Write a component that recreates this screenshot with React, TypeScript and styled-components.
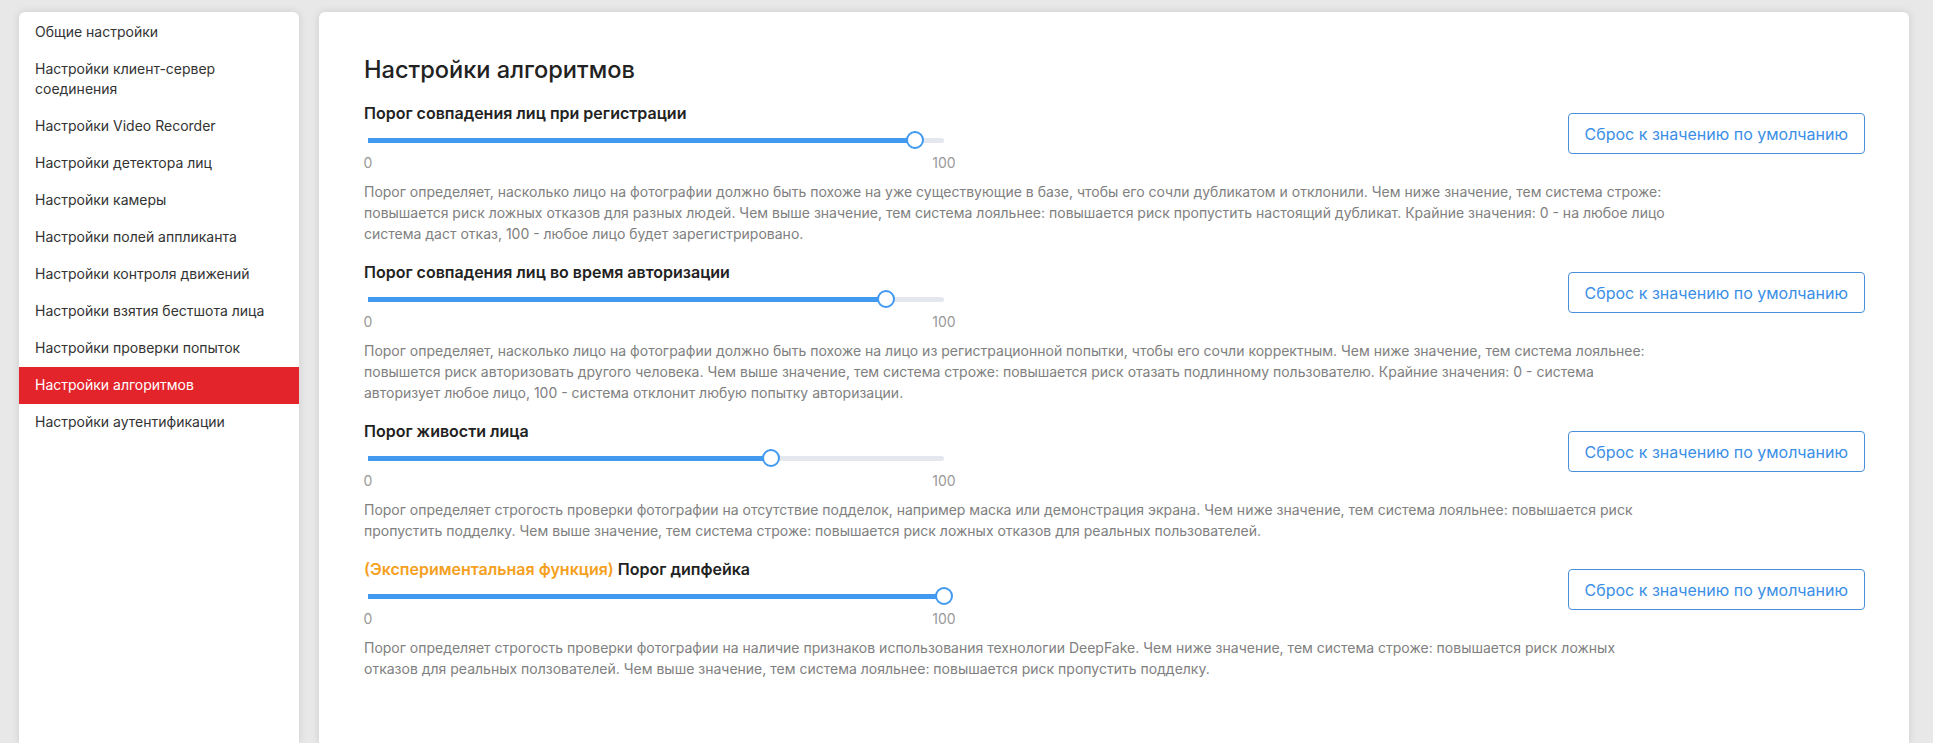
import styled, { createGlobalStyle } from "styled-components";

const GlobalStyle = createGlobalStyle`
  html, body {
    margin: 0;
    padding: 0;
    background: #e8e8e8;
    font-family: Inter, "Noto Sans", sans-serif;
    color: #222;
  }
  * {
    box-sizing: border-box;
  }
`;

const Page = styled.div`
  display: flex;
  align-items: stretch;
  gap: 20px;
  min-height: 100vh;
  padding: 12px 0 0 19px;
`;

const Sidebar = styled.nav`
  width: 280px;
  flex-shrink: 0;
  background: #fff;
  border-radius: 6px 6px 0 0;
  box-shadow: 0 0 8px rgba(0, 0, 0, 0.12);
  padding-top: 2px;
`;

interface MenuItemProps {
  $active?: boolean;
}

const MenuItem = styled.div<MenuItemProps>`
  padding: 8px 16px 9px;
  font-size: 14px;
  line-height: 20px;
  color: ${(p) => (p.$active ? "#fff" : "#333")};
  background: ${(p) => (p.$active ? "#e3242b" : "transparent")};
  cursor: pointer;
`;

const Main = styled.main`
  width: 1590px;
  flex-shrink: 0;
  background: #fff;
  border-radius: 6px 6px 0 0;
  box-shadow: 0 0 8px rgba(0, 0, 0, 0.12);
  padding: 46px 44px 40px 45px;
`;

const Title = styled.h2`
  margin: 0 0 21px;
  font-size: 23.6px;
  line-height: 24px;
  font-weight: 500;
  color: #222;
`;

const Section = styled.section`
  margin-bottom: 18px;
`;

const Row = styled.div`
  display: flex;
  justify-content: space-between;
  align-items: flex-start;
`;

const Heading = styled.h3`
  margin: 0;
  font-size: 16px;
  line-height: 20px;
  font-weight: 600;
  color: #222;
`;

const Experimental = styled.span`
  color: #f5a01e;
`;

const SliderBox = styled.div`
  width: 576px;
  margin: 7px 0 0 4px;
`;

const TrackArea = styled.div`
  position: relative;
  height: 20px;
  display: flex;
  align-items: center;
`;

const Rail = styled.div`
  position: relative;
  width: 100%;
  height: 5px;
  background: #e4e7ee;
  border-radius: 0 3px 3px 0;
`;

const Fill = styled.div`
  height: 100%;
  background: #4299f0;
`;

const Thumb = styled.div`
  position: absolute;
  top: 50%;
  width: 18px;
  height: 18px;
  border-radius: 50%;
  background: #fff;
  border: 2px solid #4299f0;
  transform: translate(-50%, -50%);
`;

const Marks = styled.div`
  position: relative;
  height: 20px;
  margin-top: 3px;
`;

const Mark = styled.span`
  position: absolute;
  top: 0;
  font-size: 14px;
  line-height: 20px;
  color: #999;
  transform: translateX(-50%);
`;

const ResetButton = styled.button`
  margin-top: 10px;
  height: 41px;
  padding: 0 16px;
  background: #fff;
  border: 1px solid #4a90d9;
  border-radius: 4px;
  color: #3a8ee6;
  font-family: Inter, "Noto Sans", sans-serif;
  font-size: 16px;
  cursor: pointer;
  white-space: nowrap;
`;

const Description = styled.p`
  margin: 8px 0 0;
  max-width: 1308px;
  font-size: 14px;
  line-height: 21px;
  color: #808080;
`;

const menu = [
  "Общие настройки",
  "Настройки клиент-сервер соединения",
  "Настройки Video Recorder",
  "Настройки детектора лиц",
  "Настройки камеры",
  "Настройки полей аппликанта",
  "Настройки контроля движений",
  "Настройки взятия бестшота лица",
  "Настройки проверки попыток",
  "Настройки алгоритмов",
  "Настройки аутентификации",
];

interface Setting {
  title: string;
  experimental?: boolean;
  value: number;
  text: string;
}

const settings: Setting[] = [
  {
    title: "Порог совпадения лиц при регистрации",
    value: 95,
    text:
      "Порог определяет, насколько лицо на фотографии должно быть похоже на уже существующие в базе, чтобы его сочли дубликатом и отклонили. Чем ниже значение, тем система строже: повышается риск ложных отказов для разных людей. Чем выше значение, тем система лояльнее: повышается риск пропустить настоящий дубликат. Крайние значения: 0 - на любое лицо система даст отказ, 100 - любое лицо будет зарегистрировано.",
  },
  {
    title: "Порог совпадения лиц во время авторизации",
    value: 90,
    text:
      "Порог определяет, насколько лицо на фотографии должно быть похоже на лицо из регистрационной попытки, чтобы его сочли корректным. Чем ниже значение, тем система лояльнее: повышется риск авторизовать другого человека. Чем выше значение, тем система строже: повышается риск отазать подлинному пользователю. Крайние значения: 0 - система авторизует любое лицо, 100 - система отклонит любую попытку авторизации.",
  },
  {
    title: "Порог живости лица",
    value: 70,
    text:
      "Порог определяет строгость проверки фотографии на отсутствие подделок, например маска или демонстрация экрана. Чем ниже значение, тем система лояльнее: повышается риск пропустить подделку. Чем выше значение, тем система строже: повышается риск ложных отказов для реальных пользователей.",
  },
  {
    title: "Порог дипфейка",
    experimental: true,
    value: 100,
    text:
      "Порог определяет строгость проверки фотографии на наличие признаков использования технологии DeepFake. Чем ниже значение, тем система строже: повышается риск ложных отказов для реальных ползователей. Чем выше значение, тем система лояльнее: повышается риск пропустить подделку.",
  },
];

const Slider = ({ value }: { value: number }) => (
  <SliderBox>
    <TrackArea>
      <Rail>
        <Fill style={{ width: `${value}%` }} />
        <Thumb style={{ left: `${value}%` }} />
      </Rail>
    </TrackArea>
    <Marks>
      <Mark style={{ left: "0%" }}>0</Mark>
      <Mark style={{ left: "100%" }}>100</Mark>
    </Marks>
  </SliderBox>
);

export default function App() {
  return (
    <>
      <GlobalStyle />
      <Page>
        <Sidebar>
          {menu.map((item) => (
            <MenuItem key={item} $active={item === "Настройки алгоритмов"}>
              {item}
            </MenuItem>
          ))}
        </Sidebar>
        <Main>
          <Title>Настройки алгоритмов</Title>
          {settings.map((s) => (
            <Section key={s.title}>
              <Row>
                <div>
                  <Heading>
                    {s.experimental && (
                      <Experimental>(Экспериментальная функция) </Experimental>
                    )}
                    {s.title}
                  </Heading>
                  <Slider value={s.value} />
                </div>
                <ResetButton>Сброс к значению по умолчанию</ResetButton>
              </Row>
              <Description>{s.text}</Description>
            </Section>
          ))}
        </Main>
      </Page>
    </>
  );
}
